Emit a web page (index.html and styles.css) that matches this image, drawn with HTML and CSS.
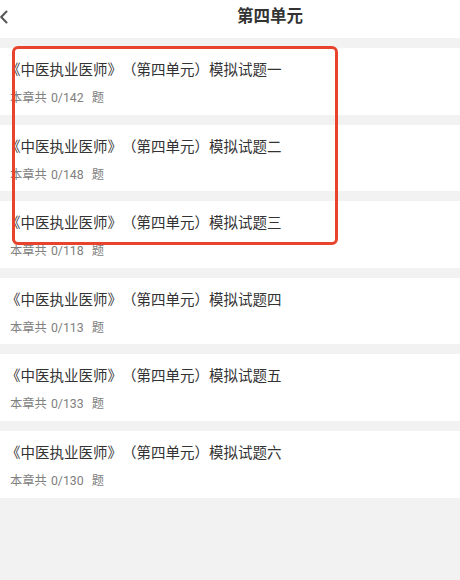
FILE: index.html
```html
<!DOCTYPE html>
<html lang="zh-CN">
<head>
<meta charset="utf-8">
<title>第四单元</title>
<link rel="stylesheet" href="styles.css">
</head>
<body>
<div class="page">
  <header class="topbar">
    <svg class="back" width="10" height="14" viewBox="0 0 10 14" aria-hidden="true">
      <polyline points="6.5,1.5 1.2,7 6.5,12.5" fill="none" stroke="#555" stroke-width="2" stroke-linecap="round" stroke-linejoin="round"/>
    </svg>
    <h1 class="title">第四单元</h1>
  </header>
  <main class="list">
    <div class="card">
      <div class="card-title">《中医执业医师》（第四单元）模拟试题一</div>
      <div class="card-sub">本章共 0/142 &nbsp;题</div>
    </div>
    <div class="card">
      <div class="card-title">《中医执业医师》（第四单元）模拟试题二</div>
      <div class="card-sub">本章共 0/148 &nbsp;题</div>
    </div>
    <div class="card">
      <div class="card-title">《中医执业医师》（第四单元）模拟试题三</div>
      <div class="card-sub">本章共 0/118 &nbsp;题</div>
    </div>
    <div class="card">
      <div class="card-title">《中医执业医师》（第四单元）模拟试题四</div>
      <div class="card-sub">本章共 0/113 &nbsp;题</div>
    </div>
    <div class="card">
      <div class="card-title">《中医执业医师》（第四单元）模拟试题五</div>
      <div class="card-sub">本章共 0/133 &nbsp;题</div>
    </div>
    <div class="card">
      <div class="card-title">《中医执业医师》（第四单元）模拟试题六</div>
      <div class="card-sub">本章共 0/130 &nbsp;题</div>
    </div>
  </main>
  <div class="highlight" aria-hidden="true"></div>
</div>
</body>
</html>
```

FILE: styles.css
```css
html, body {
  margin: 0;
  padding: 0;
}
body {
  background: #f2f2f2;
  font-family: "Roboto", "Noto Sans CJK SC", sans-serif;
  text-spacing-trim: space-all;
  width: 460px;
  height: 580px;
  overflow: hidden;
}
.page {
  position: relative;
  min-height: 580px;
}
.topbar {
  height: 38px;
  background: #ffffff;
  display: flex;
  align-items: center;
  justify-content: center;
  padding-left: 80px;
  position: relative;
}
.back {
  position: absolute;
  left: 0;
  top: 10px;
}
.title {
  margin: 0;
  font-size: 16.5px;
  font-weight: 700;
  color: #333333;
  line-height: 24px;
  margin-top: -4px;
}
.list {
  display: flex;
  flex-direction: column;
  gap: 10px;
  padding-top: 10px;
}
.card {
  background: #ffffff;
  height: 66.6px;
  box-sizing: border-box;
  padding-top: 11px;
  padding-left: 6px;
}
.card-title {
  font-family: "Noto Sans CJK SC", sans-serif;
  font-size: 14.5px;
  line-height: 20px;
  color: #333333;
  text-spacing-trim: space-all;
}
.card-sub {
  margin-top: 11px;
  margin-left: 4px;
  font-size: 12.3px;
  line-height: 16px;
  color: #808080;
  word-spacing: 1px;
}
.highlight {
  position: absolute;
  left: 12px;
  top: 46px;
  width: 326px;
  height: 199px;
  box-sizing: border-box;
  border: 3px solid #e8432c;
  border-radius: 6px;
}
```
